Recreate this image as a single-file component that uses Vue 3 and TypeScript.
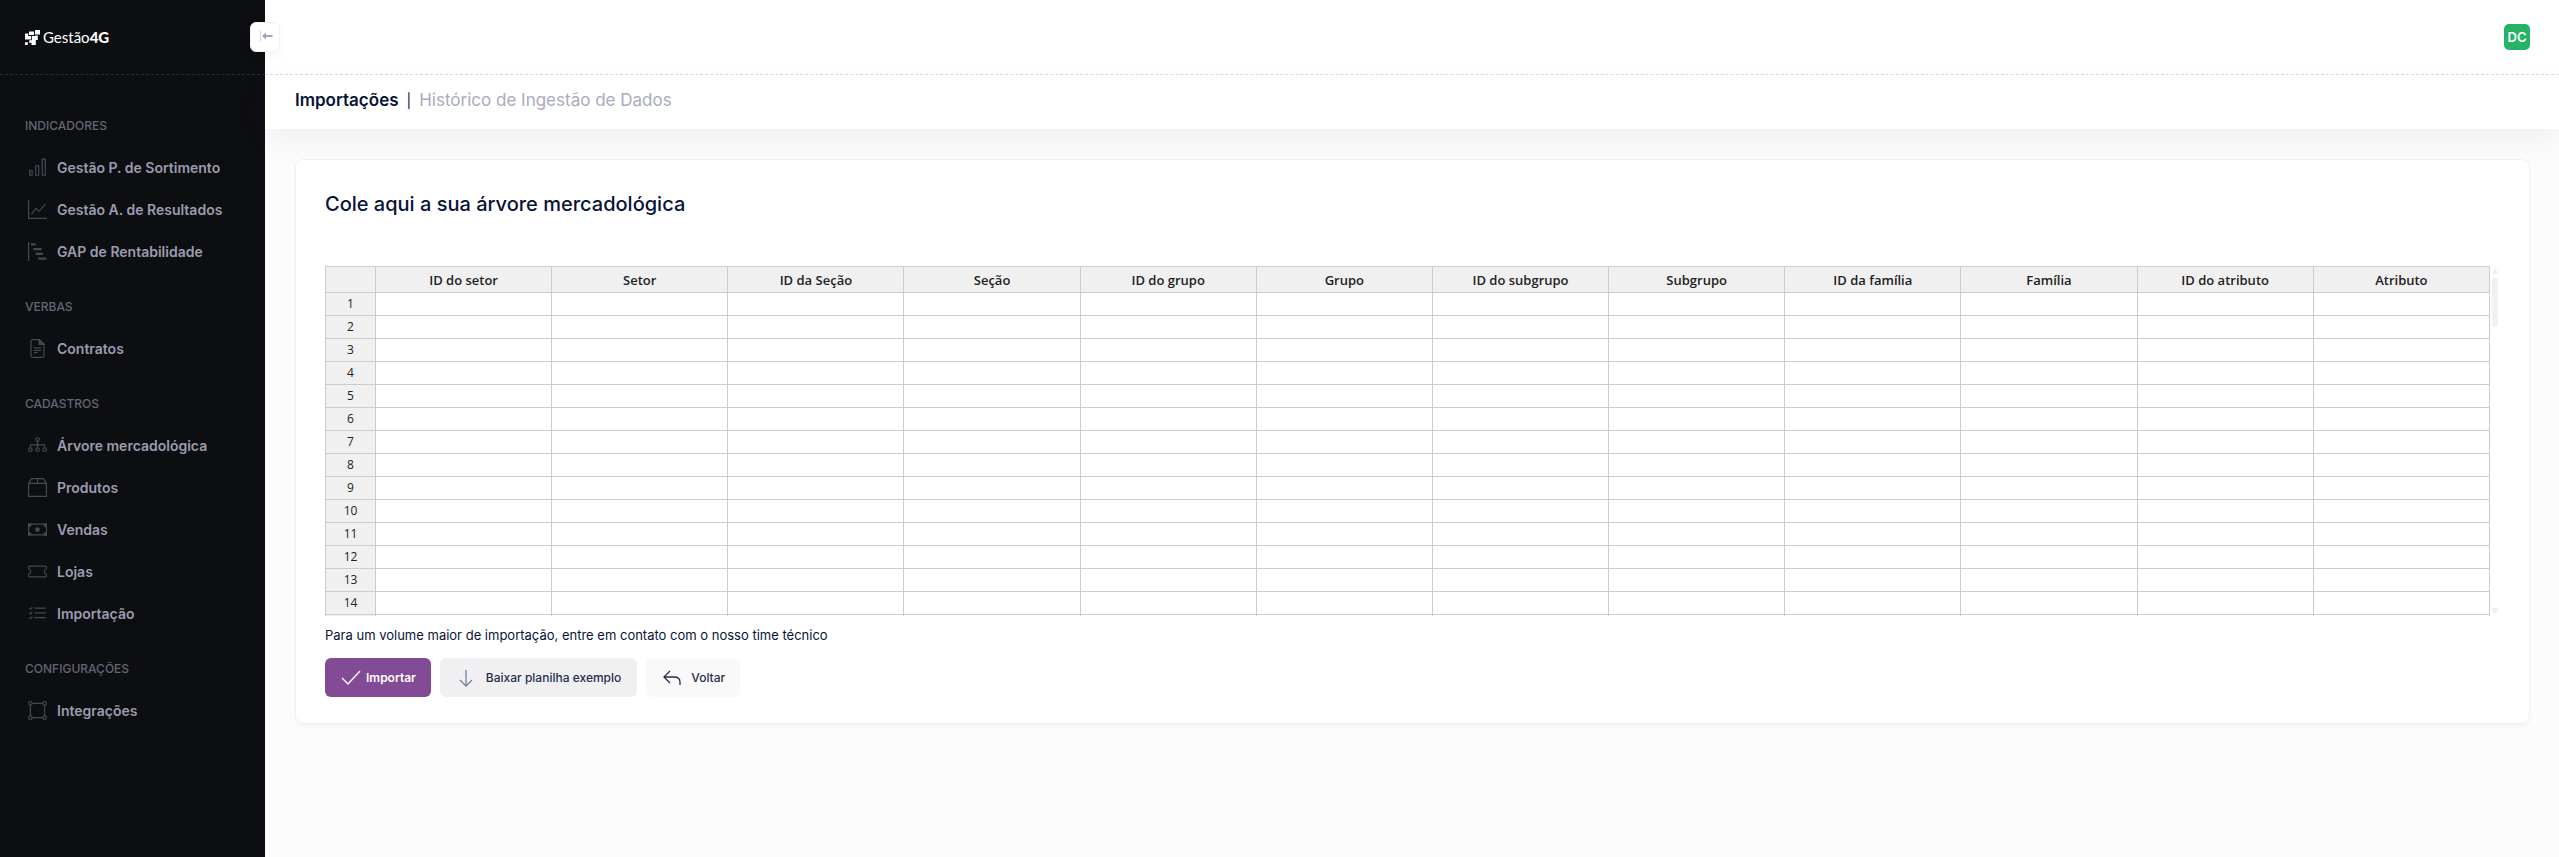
<script setup lang="ts">
interface Item {
  label: string
  icon: string
}
interface Section {
  title: string
  items: Item[]
}

const icons: Record<string, string> = {
  bars: '<path d="M1.5 10.5h2v4h-2zM6.5 6.500h2.500v8H6.500zM12 1h2.500v13.500H12z"/>',
  graph: '<path d="M.5 0v15.500H16M3 12l3.500-5 3 2.500L14.500 3.500"/>',
  steps: '<path d="M.5 0v16"/><path d="M2.500 2h4M4.500 6h7M6.500 10h6M8.500 14h7" stroke-width="1.700"/>',
  file: '<path d="M9.500.5H4A1.500 1.500 0 0 0 2.500 2v12A1.500 1.500 0 0 0 4 15.500h8a1.500 1.500 0 0 0 1.500-1.500V4.500zM9.500.5v3a1 1 0 0 0 1 1h3M5 7.500h6M5 9.500h6M5 11.500h3"/><path d="M9.500.5v4h4z" fill="currentColor"/>',
  tree: '<circle cx="8" cy="3" r="1.500"/><circle cx="2" cy="11.500" r="1.500"/><circle cx="8" cy="11.500" r="1.500"/><circle cx="14" cy="11.500" r="1.500"/><path d="M8 4.500V9.500M2 9.500v-2h12v2"/>',
  box: '<path d="M.5 4.500v11h15v-11L13 .5H3zM.5 4.500h15M8 .5v4"/>',
  cash: '<path d="M.5 3.500h15v9H.5z"/><path d="M.5 3.500h2a2 2 0 0 1-2 2zM15.500 3.500h-2a2 2 0 0 0 2 2zM.5 12.500h2a2 2 0 0 0-2-2zM15.500 12.500h-2a2 2 0 0 1 2-2z" fill="currentColor"/><circle cx="8" cy="8" r="1.500" fill="currentColor"/>',
  ticket: '<path d="M.5 4.500a1 1 0 0 1 1-1h13a1 1 0 0 1 1 1v1.200a2.400 2.400 0 0 0 0 4.600v1.200a1 1 0 0 1-1 1h-13a1 1 0 0 1-1-1v-1.200a2.400 2.400 0 0 0 0-4.600z"/>',
  list: '<path d="M5.500 3.500h9.500M5.500 7.500h9.500M5.500 11.500h9.500M1.200 3.500l.8.800 1.700-1.800M1.200 7.500l.8.800 1.700-1.800M1.200 11.500l.8.800 1.700-1.800"/>',
  bounding: '<circle cx="2" cy="2" r="1.500"/><circle cx="14" cy="2" r="1.500"/><circle cx="2" cy="14" r="1.500"/><circle cx="14" cy="14" r="1.500"/><path d="M3.500 2h9M3.500 14h9M2 3.500v9M14 3.500v9"/>',
}

const sections: Section[] = [
  {
    title: 'INDICADORES',
    items: [
      { label: 'Gestão P. de Sortimento', icon: 'bars' },
      { label: 'Gestão A. de Resultados', icon: 'graph' },
      { label: 'GAP de Rentabilidade', icon: 'steps' },
    ],
  },
  { title: 'VERBAS', items: [{ label: 'Contratos', icon: 'file' }] },
  {
    title: 'CADASTROS',
    items: [
      { label: 'Árvore mercadológica', icon: 'tree' },
      { label: 'Produtos', icon: 'box' },
      { label: 'Vendas', icon: 'cash' },
      { label: 'Lojas', icon: 'ticket' },
      { label: 'Importação', icon: 'list' },
    ],
  },
  { title: 'CONFIGURAÇÕES', items: [{ label: 'Integrações', icon: 'bounding' }] },
]

const columns: string[] = [
  'ID do setor', 'Setor', 'ID da Seção', 'Seção', 'ID do grupo', 'Grupo',
  'ID do subgrupo', 'Subgrupo', 'ID da família', 'Família', 'ID do atributo', 'Atributo',
]
const rowCount = 14
</script>

<template>
  <div class="layout">
    <aside class="sidebar">
      <div class="brand">
        <a class="logo" href="#" aria-label="Gestão4G">
          <svg class="mark" viewBox="0 0 15 15" aria-hidden="true">
            <path fill="#fff" d="M10 0h5v4.500h-5zM4 1.500h5V5H4zM0 3.500h3.200V6H6v3.500H0zM6.800 6h3.400V5.400h2.600V10h-2v5H6.500v-2.200H4.200v-2.500h2.600zM0 12.200h2.800V15H0z" />
          </svg>
          <span class="word">Gestão<b>4G</b></span>
        </a>
        <button class="toggle" type="button" aria-label="Recolher menu">
          <svg viewBox="0 0 14 12" aria-hidden="true">
            <path d="M1.500 1v10" stroke="#d5d7e0" stroke-width="1" fill="none" />
            <path d="M7 5h6.500v2H7v2.500L3 6 7 2.500z" fill="#a1a5b7" />
          </svg>
        </button>
      </div>
      <nav class="menu">
        <section v-for="s in sections" :key="s.title">
          <h2>{{ s.title }}</h2>
          <a v-for="i in s.items" :key="i.label" href="#">
            <svg viewBox="0 0 16 16" aria-hidden="true" v-html="icons[i.icon]"></svg>
            <span>{{ i.label }}</span>
          </a>
        </section>
      </nav>
    </aside>

    <div class="page">
      <header class="topbar">
        <button class="avatar" type="button">DC</button>
      </header>
      <div class="toolbar">
        <h1>Importações</h1>
        <span class="bar">|</span>
        <span class="crumb">Histórico de Ingestão de Dados</span>
      </div>
      <main>
        <div class="card">
          <h3>Cole aqui a sua árvore mercadológica</h3>
          <div class="sheet">
            <div class="viewport">
              <table>
                <colgroup>
                  <col class="index" />
                  <col v-for="c in columns" :key="c" />
                </colgroup>
                <thead>
                  <tr>
                    <th></th>
                    <th v-for="c in columns" :key="c" scope="col">{{ c }}</th>
                  </tr>
                </thead>
                <tbody>
                  <tr v-for="r in rowCount" :key="r">
                    <th scope="row">{{ r }}</th>
                    <td v-for="c in columns" :key="c"></td>
                  </tr>
                  <tr class="peek" aria-hidden="true">
                    <th></th>
                    <td v-for="c in columns" :key="c"></td>
                  </tr>
                </tbody>
              </table>
            </div>
            <div class="scroll" aria-hidden="true">
              <i class="up"></i>
              <i class="thumb"></i>
              <i class="down"></i>
            </div>
          </div>
          <p>Para um volume maior de importação, entre em contato com o nosso time técnico</p>
          <div class="actions">
            <button class="primary" type="button">
              <svg viewBox="0 0 20 18" aria-hidden="true"><path d="M1 9l6 6L19 2" /></svg>
              Importar
            </button>
            <button class="light" type="button">
              <svg viewBox="0 0 20 18" aria-hidden="true"><path d="M10 1v16M4 11l6 6 6-6" /></svg>
              Baixar planilha exemplo
            </button>
            <button class="back" type="button">
              <svg viewBox="0 0 20 18" aria-hidden="true"><path d="M8 2L2 8l6 6M2 8h10q6 0 6 5v3" /></svg>
              Voltar
            </button>
          </div>
        </div>
      </main>
    </div>
  </div>
</template>

<style>
body {
  margin: 0;
  background: #fcfcfc;
}
</style>

<style scoped>
* {
  box-sizing: border-box;
}
.layout {
  display: flex;
  min-height: 100vh;
  font-family: Inter, "Liberation Sans", sans-serif;
  font-size: 13px;
  color: #071437;
}
button {
  font: inherit;
  border: 0;
  margin: 0;
  cursor: pointer;
}
a {
  text-decoration: none;
}
.sidebar {
  flex: 0 0 265px;
  background: #0d0e12;
}
.brand {
  position: relative;
  height: 75px;
  display: flex;
  align-items: center;
  padding-left: 25px;
  border-bottom: 1px dashed #2a2b31;
}
.logo {
  display: flex;
  align-items: center;
  gap: 3px;
  color: #fff;
}
.mark {
  width: 15px;
  height: 15px;
}
.word {
  font-family: Lato, sans-serif;
  font-size: 15px;
  line-height: 16px;
}
.word b {
  font-weight: 900;
}
.toggle {
  position: absolute;
  right: -15px;
  top: 22px;
  width: 30px;
  height: 30px;
  display: flex;
  align-items: center;
  justify-content: center;
  padding: 0 0 2px 2px;
  background: #fff;
  border: 1px solid #f1f1f2;
  border-radius: 6px;
  box-shadow: 0 4px 12px rgba(0, 0, 0, 0.04);
}
.toggle svg {
  flex: none;
  width: 14px;
  height: 12px;
}
.menu {
  padding: 16px 0 30px;
}
.menu section {
  padding-top: 14px;
}
.menu h2 {
  margin: 0;
  padding-left: 25px;
  line-height: 41px;
  font-size: 12px;
  font-weight: 500;
  color: #646672;
}
.menu a {
  display: flex;
  align-items: center;
  gap: 10px;
  height: 42px;
  padding-left: 28px;
  font-size: 14px;
  font-weight: 600;
  color: #9a9cae;
}
.menu svg {
  width: 19px;
  height: 19px;
  color: #464852;
  fill: none;
  stroke: currentColor;
  stroke-width: 1;
}
.page {
  flex: 1;
  min-width: 0;
}
.topbar {
  height: 75px;
  display: flex;
  align-items: center;
  justify-content: flex-end;
  padding-right: 29px;
  background: #fff;
  border-bottom: 1px dashed #dbdfe9;
}
.avatar {
  width: 26px;
  height: 26px;
  padding: 0;
  border-radius: 5px;
  background: #27b365;
  color: #fff;
  font-weight: 600;
}
.toolbar {
  height: 54px;
  display: flex;
  align-items: center;
  gap: 8px;
  padding: 0 30px 4px;
  background: #fff;
  box-shadow: 0 10px 30px rgba(82, 63, 105, 0.07);
  font-size: 17px;
}
.toolbar h1 {
  margin: 0;
  font-size: 17px;
  font-weight: 600;
}
.bar {
  font-size: 14px;
}
.crumb {
  color: #a8abbd;
}
main {
  padding: 30px 29px 30px 30px;
}
.card {
  padding: 30px 31px 26px 29px;
  background: #fff;
  border: 1px solid #f1f1f2;
  border-radius: 8px;
  box-shadow: 0 3px 4px rgba(0, 0, 0, 0.03);
}
.card h3 {
  margin: 0 0 48px;
  line-height: 28px;
  font-size: 20px;
  font-weight: 500;
}
.sheet {
  display: flex;
  gap: 2px;
}
.viewport {
  flex: 1;
  overflow: hidden;
  border-top: 1px solid #ccc;
  border-left: 1px solid #ccc;
}
table {
  width: 100%;
  table-layout: fixed;
  border-collapse: separate;
  border-spacing: 0;
  font-family: "Open Sans", "Noto Sans", sans-serif;
  font-size: 13px;
  color: #222;
}
.index {
  width: 50px;
}
th,
td {
  height: 23px;
  padding: 0;
  line-height: 22px;
  border-right: 1px solid #ccc;
  border-bottom: 1px solid #ccc;
}
th {
  background: #f0f0f0;
  font-weight: 400;
}
tbody th {
  font-size: 12px;
}
thead th {
  height: 26px;
  font-weight: 600;
}
.peek th,
.peek td {
  height: 1px;
  border-bottom: 0;
}
.scroll {
  width: 6px;
  display: flex;
  flex-direction: column;
  padding: 2px 0;
}
.up,
.down {
  height: 6px;
  background: #f0f0f2;
  clip-path: polygon(50% 0, 100% 80%, 100% 100%, 0 100%, 0 80%);
}
.down {
  margin-top: auto;
  transform: rotate(180deg);
}
.thumb {
  height: 49px;
  margin-top: 4px;
  border-radius: 3px;
  background: #f0f0f2;
}
.card p {
  margin: 9px 0 13px;
  line-height: 20px;
  font-size: 13px;
}
.actions {
  display: flex;
  gap: 9px;
}
.actions button {
  height: 39px;
  display: flex;
  align-items: center;
  border-radius: 6px;
  font-size: 12px;
  font-weight: 500;
  color: #252f4a;
}
.actions svg {
  width: 20px;
  height: 18px;
  fill: none;
  stroke: currentColor;
  stroke-width: 1.3;
}
.actions .primary {
  gap: 5px;
  padding: 0 15px 0 16px;
  background: #834a95;
  color: #fff;
  font-weight: 600;
}
.actions .light {
  gap: 10px;
  padding: 0 16px;
  background: #f0f0f3;
}
.actions .light svg {
  color: #78829d;
}
.actions .back {
  gap: 9px;
  padding: 0 15px 0 16px;
  background: #f9f9f9;
}
</style>
